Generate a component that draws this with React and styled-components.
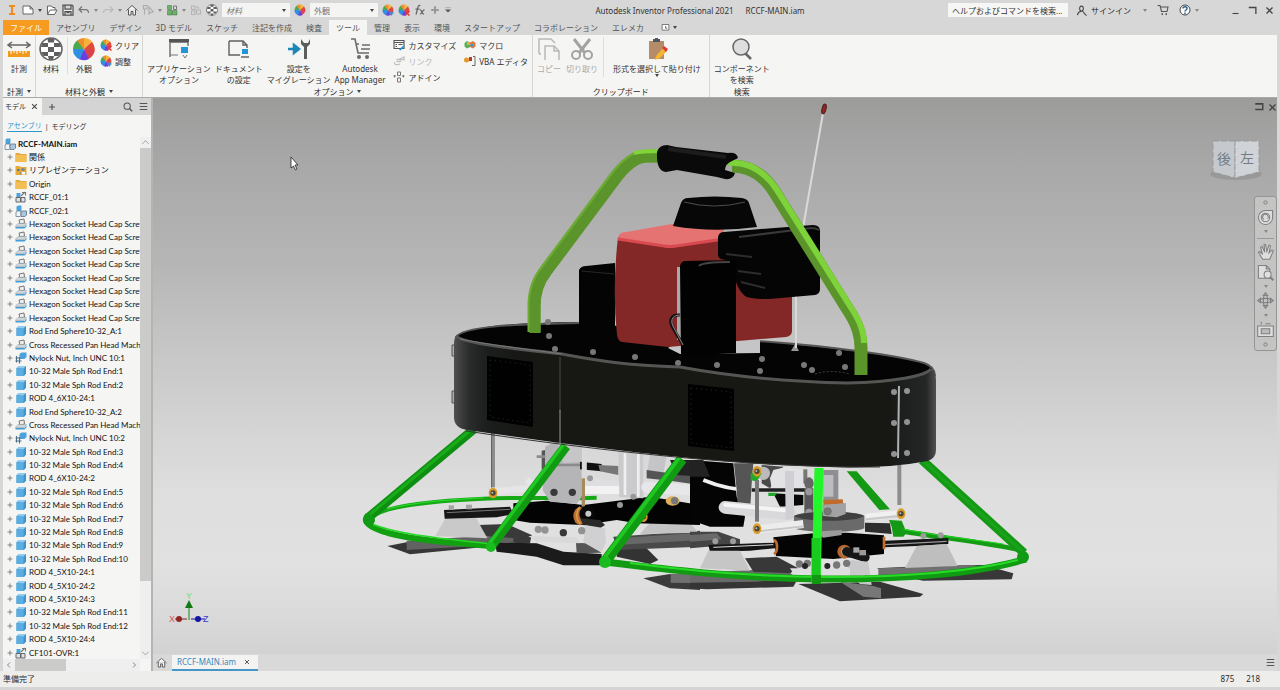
import React from "react";
import styled, { createGlobalStyle } from "styled-components";

const GlobalStyle = createGlobalStyle`
  * {
    box-sizing: border-box;
  }

  body {
    margin: 0;
    background: #d7d7d7;
    color: #2b2b2b;
    font-family: "Noto Sans", "Noto Sans CJK JP", sans-serif;
    font-size: 8px;
    line-height: 11px;
  }

  button, input, select {
    font: inherit;
    color: inherit;
    border: 0;
    padding: 0;
    margin: 0;
    background: none;
  }

  svg {
    display: block;
    flex: none;
  }

  ul {
    list-style: none;
    margin: 0;
    padding: 0;
  }
`;

const tabs = ["アセンブリ", "デザイン", "3D モデル", "スケッチ", "注記を作成", "検査", "ツール", "管理", "表示", "環境", "スタートアップ", "コラボレーション", "エレメカ"];

const treeRows = [
  ["folder", "関係"],
  ["views", "リプレゼンテーション"],
  ["folder", "Origin"],
  ["sub", "RCCF_01:1"],
  ["assembly", "RCCF_02:1"],
  ["screw", "Hexagon Socket Head Cap Screw"],
  ["screw", "Hexagon Socket Head Cap Screw"],
  ["screw", "Hexagon Socket Head Cap Screw"],
  ["screw", "Hexagon Socket Head Cap Screw"],
  ["screw", "Hexagon Socket Head Cap Screw"],
  ["screw", "Hexagon Socket Head Cap Screw"],
  ["screw", "Hexagon Socket Head Cap Screw"],
  ["screw", "Hexagon Socket Head Cap Screw"],
  ["part", "Rod End Sphere10-32_A:1"],
  ["screw", "Cross Recessed Pan Head Mach"],
  ["nut", "Nylock Nut, Inch UNC 10:1"],
  ["part", "10-32 Male Sph Rod End:1"],
  ["part", "10-32 Male Sph Rod End:2"],
  ["part", "ROD 4_6X10-24:1"],
  ["part", "Rod End Sphere10-32_A:2"],
  ["screw", "Cross Recessed Pan Head Mach"],
  ["nut", "Nylock Nut, Inch UNC 10:2"],
  ["part", "10-32 Male Sph Rod End:3"],
  ["part", "10-32 Male Sph Rod End:4"],
  ["part", "ROD 4_6X10-24:2"],
  ["part", "10-32 Male Sph Rod End:5"],
  ["part", "10-32 Male Sph Rod End:6"],
  ["part", "10-32 Male Sph Rod End:7"],
  ["part", "10-32 Male Sph Rod End:8"],
  ["part", "10-32 Male Sph Rod End:9"],
  ["part", "10-32 Male Sph Rod End:10"],
  ["part", "ROD 4_5X10-24:1"],
  ["part", "ROD 4_5X10-24:2"],
  ["part", "ROD 4_5X10-24:3"],
  ["part", "10-32 Male Sph Rod End:11"],
  ["part", "10-32 Male Sph Rod End:12"],
  ["part", "ROD 4_5X10-24:4"],
  ["sub", "CF101-OVR:1"],
];

/* ---------- icons ---------- */

const Ball = () => (
  <>
    <path d="M12 12 1 12A11 11 0 0 1 6 3z" fill="#4aa84e" />
    <path d="M12 12 5 3.500A11 11 0 0 1 13 1z" fill="#f08b2e" />
    <path d="M12 12 12 1A11 11 0 0 1 21 6z" fill="#f6b23c" />
    <path d="M12 12 20 5A11 11 0 0 1 22 16z" fill="#e0483e" />
    <path d="M12 12 22.500 14A11 11 0 0 1 16 22z" fill="#d8434c" />
    <path d="M12 12 17 22A11 11 0 0 1 7 22z" fill="#6a3fe0" />
    <path d="M12 12 8 22.400A11 11 0 0 1 1 12z" fill="#2f8fe0" />
  </>
);

const Checker = () => (
  <>
    <circle cx="12" cy="12" r="11" fill="#fff" stroke="#666" strokeWidth="1.500" />
    <path d="M8.500 1.500h7l-.5 4H9zM3 6h6v4H2zM15 6h6l1 4h-7zM9 10h6v5H9zM2 15h7v4H4.500zM15 15h7l-2.500 4H15zM9 19h6l-1 4h-4zM1 11h1v3H1z" fill="#5f5f5f" />
  </>
);

const paths = {
  logo: <path d="M6 2h12v4h-4v12h4v4H6v-4h4V6H6z" fill="#f08c1e" />,
  newFile: <path d="M2 4h14l6 6v10H2zM16 4v6h6" fill="#fff" stroke="#666" strokeWidth="2" />,
  open: <path d="M3 21V4h8l2 3h5v5M3 21l5-9h14l-5 9z" fill="#fff" stroke="#666" strokeWidth="2" />,
  save: <path d="M2 2h18l2 2v18H2zM6 3v7h12V3M6 22v-7h12v7M9 17h6" fill="#eee" stroke="#505050" strokeWidth="2.500" />,
  undo: <path d="M8 5 2 11l6 6M3 11h12c4 0 6 3 6 7" fill="none" stroke="#777" strokeWidth="2.500" />,
  redo: <path d="M16 5l6 6-6 6M21 11H9c-4 0-6 3-6 7" fill="none" stroke="#bcbcbc" strokeWidth="2.500" />,
  home: <path d="M1 13 12 3l11 10M5 11v11h5v-7h4v7h5V11" fill="#f6f6f6" stroke="#555" strokeWidth="2" />,
  select: <path d="M3 3h7v7H3zM5 10v11M14 6v14l4-4h5z" fill="none" stroke="#aaa" strokeWidth="2.200" />,
  parts: (
    <>
      <path d="M3 3h8v8H3zM3 13h9v9H3zM13 13h9v9h-9z" fill="#65b565" stroke="#4c6b4c" />
      <path d="M15 4h6v7h-6z" fill="none" stroke="#777" strokeWidth="2" />
    </>
  ),
  update: <path d="M3 4h7v7H3zM3 14h7v7H3zM13 12h8v8h-8zM13 5l5 4" fill="none" stroke="#b4b4b4" strokeWidth="2.200" />,
  checker: <Checker />,
  ball: <Ball />,
  ballAdd: (
    <>
      <Ball />
      <path d="M14 18h9M19 14v9" stroke="#2f8fe0" strokeWidth="3" />
    </>
  ),
  ballClear: (
    <>
      <Ball />
      <path d="m14 14 9 9m0-9-9 9" stroke="#e0383e" strokeWidth="3" />
    </>
  ),
  fx: <path d="M13 3c-4-1-5 2-6 7L4 21M3 10h8M12 12c4-1 3 9 8 8M21 11c-4 0-5 9-9 9" fill="none" stroke="#666" strokeWidth="2.500" />,
  plus: <path d="M12 3v18M3 12h18" stroke="#999" strokeWidth="5" />,
  caretBar: <path d="M4 5h16M4 11h16l-8 8z" fill="#555" stroke="#555" />,
  measure: (
    <>
      <path d="M1 8h22M5 5 1 8l4 3M19 5l4 3-4 3" fill="none" stroke="#666" strokeWidth="1.500" />
      <path d="M1 14h22v6H1z" fill="#f39a1e" />
      <path d="M4 14v3M7 14v2M10 14v3M13 14v2M16 14v3M19 14v2" stroke="#fff" />
    </>
  ),
  appOptions: (
    <>
      <path d="M3 20V4h18v5M3 5h18" fill="none" stroke="#606060" strokeWidth="1.300" />
      <path d="M2 2h20v3H2z" fill="#555" />
      <path d="M14 10h7v6h-7z" fill="#2196d8" />
      <path d="M3 18h8M16 18l2 3 2-3" fill="none" stroke="#777" />
    </>
  ),
  docOptions: (
    <>
      <path d="M2 4h14l4 4v3M2 4v14h11M16 4v4h4" fill="none" stroke="#606060" strokeWidth="1.400" />
      <path d="M15 12h6v5h-6z" fill="#2196d8" />
      <path d="M14 20h8" stroke="#666" strokeWidth="1.500" />
    </>
  ),
  migrate: (
    <>
      <path d="M1 12h7M7 8l5 4-5 4z" stroke="#1e86b8" strokeWidth="2.500" fill="#1e86b8" />
      <path d="M14 2v5l3 3v12h3V10l3-3V2l-2 4h-4z" fill="#5d5d5d" />
    </>
  ),
  cart: (
    <>
      <path d="M3 2h4l3 14h11M8 7h3M14 8h8M13 12h9" fill="none" stroke="#6b6b6b" strokeWidth="1.600" />
      <circle cx="11" cy="20" r="2" fill="#6b6b6b" />
      <circle cx="19" cy="20" r="2" fill="#6b6b6b" />
    </>
  ),
  customize: (
    <>
      <path d="M2 3h20v16H2zM2 7h20M5 11h3M11 11h8M5 15h3" fill="none" stroke="#555" strokeWidth="2.200" />
      <path d="m12 21 9-8 2 2-8 8z" fill="#2196d8" />
    </>
  ),
  link: <path d="M3 14c-2 6 8 7 11 3M7 11c2-4 8-3 8 2H7M14 8l8-4v6z" fill="none" stroke="#c0c0c0" strokeWidth="2.500" />,
  addin: <path d="M9 2h6v7H9zM9 14h6v8H9zM1 10h5M18 10h5M3 8v5M21 8v5" fill="none" stroke="#777" strokeWidth="2" />,
  macro: (
    <>
      <path d="M1 8 6 4l6 3v9l-6 3-5-4z" fill="#58b058" />
      <path d="m6 5 6 3v4H6z" fill="#e6b03c" />
      <path d="m12 7 6-3 5 4v7l-5 4-6-3z" fill="#e07a38" />
      <path d="M13 10h5v5h-5z" fill="#3997d8" />
    </>
  ),
  vba: (
    <>
      <circle cx="5" cy="10" r="5" fill="#e09a28" />
      <path d="M10 4h6v8h-6z" fill="#b8382e" />
      <path d="M18 3h4v18h-6" fill="none" stroke="#666" strokeWidth="2" />
    </>
  ),
  copy: <path d="M2 17V2h12l4 4M2 17h2M8 23V9h9l5 5v9M17 9v5h5" fill="none" stroke="#b9b9b9" strokeWidth="1.500" />,
  cut: (
    <>
      <path d="M4 2 15 16M20 2 9 16" stroke="#a3a3a3" strokeWidth="3" />
      <circle cx="6" cy="18" r="4" fill="none" stroke="#a3a3a3" strokeWidth="2" />
      <circle cx="18" cy="18" r="4" fill="none" stroke="#a3a3a3" strokeWidth="2" />
    </>
  ),
  paste: (
    <>
      <path d="M4 4h15v18H4z" fill="#b58c68" />
      <path d="M8 5V2h2V1h3v1h2v3z" fill="#4d5862" />
      <path d="m11 19 7-8 4 3-7 7-5 2z" fill="#f2b632" />
      <path d="m17 11 2-2 4 3-2 3z" fill="#dd3b3b" />
    </>
  ),
  find: (
    <>
      <path d="m15 16 6 6" stroke="#666" strokeWidth="2.500" />
      <circle cx="11" cy="10" r="8" fill="#dedede" stroke="#666" strokeWidth="1.500" />
    </>
  ),
  search: (
    <>
      <path d="m15 15 7 7" stroke="#555" strokeWidth="3.500" />
      <circle cx="10" cy="10" r="7.500" fill="none" stroke="#555" strokeWidth="2.500" />
    </>
  ),
  menu: <path d="M2 4h20M2 12h20M2 20h20" stroke="#555" strokeWidth="3" />,
  cross: <path d="m4 4 16 16M20 4 4 20" stroke="#444" strokeWidth="3.500" />,
  add: <path d="M12 3v18M3 12h18" stroke="#555" strokeWidth="3.500" />,
  expand: <path d="M12 2v20M2 12h20" stroke="#777" strokeWidth="3.500" />,
  user: <path d="M12 13c-5 0-6-10 0-11 6 1 5 11 0 11zm0 0c-5 1-8 4-9 9M12 13c4 1 6 3 8 8m-3-4 6 6" fill="none" stroke="#444" strokeWidth="2.200" />,
  trolley: (
    <>
      <path d="M1 3h5l3 12h11l2-9H7" fill="none" stroke="#555" strokeWidth="2.200" />
      <path d="M9 20h3M17 20h3" stroke="#555" strokeWidth="3.500" />
    </>
  ),
  help: (
    <>
      <circle cx="12" cy="12" r="10" fill="#fff" stroke="#444" strokeWidth="2" />
      <path d="M8 9c0-5 8-5 8 0 0 3-4 3-4 6M12 17v3" fill="none" stroke="#27658f" strokeWidth="3" />
    </>
  ),
  minimize: <path d="M4 20h16" stroke="#444" strokeWidth="3" />,
  restore: <path d="M2 4h19v17" fill="none" stroke="#444" strokeWidth="3.500" />,
  frame: <path d="M3 4h18v14H3M3 5h18" fill="none" stroke="#444" strokeWidth="3.500" />,
  play: <path d="M3 4h18v15H3zM12 8v6h5" fill="#fff" stroke="#555" strokeWidth="2" />,
  up: <path d="m5 15 7-7 7 7" fill="none" stroke="#999" strokeWidth="2" />,
  down: <path d="m5 8 7 7 7-7" fill="none" stroke="#999" strokeWidth="2" />,
  left: <path d="m14 7-5 5 5 5" fill="none" stroke="#888" strokeWidth="2" />,
  right: <path d="m10 7 5 5-5 5" fill="none" stroke="#888" strokeWidth="2" />,
  folder: (
    <>
      <path d="M1 4h8l2 2h12v16H1z" fill="#e6a93a" />
      <path d="M1 8h22v14H1z" fill="#f3bf55" />
    </>
  ),
  views: (
    <>
      <path d="M1 4h8l2 2h12v16H1z" fill="#e6a93a" />
      <path d="M4 10h5v4H4zM13 9h6v4h-6zM11 16h5v5h-5z" fill="#4b7fae" />
      <path d="M13 16h7v5h-7z" fill="#fff" />
    </>
  ),
  assembly: (
    <>
      <path d="m3 3 3-2h7v10l-3 2H3z" fill="#4ba3dd" />
      <path d="m2 14 3-2h7v9l-2 2H2z" fill="#f2f4f5" stroke="#66788a" strokeWidth="1.500" />
      <path d="m12 14 3-2h8v8l-3 3h-8z" fill="#a9c7de" stroke="#56697b" strokeWidth="1.500" />
    </>
  ),
  sub: (
    <>
      <path d="M3 4h8v8H3z" fill="#4ba3dd" />
      <path d="M2 13h9v9H2zM12 13h8v9h-8z" fill="#dce3e8" stroke="#666" strokeWidth="2" />
      <path d="m12 10 8-8M14 3h7v6" fill="none" stroke="#777" strokeWidth="2.200" />
    </>
  ),
  screw: (
    <>
      <path d="m8 4 10-2 1 8-9 2z" fill="#eee" stroke="#777" strokeWidth="2" />
      <path d="m1 16 5-5h17l-5 6H1z" fill="#cfd6da" stroke="#8b979f" />
      <path d="M1 18h18l4-5v4l-4 4H1z" fill="#439dd6" />
    </>
  ),
  nut: (
    <>
      <path d="m9 4 4-3h10v9l-4 4H9z" fill="#4ba3dd" />
      <path d="M3 8v13M9 10v13M1 12h10M1 18h12" stroke="#4f6f88" strokeWidth="2.200" />
    </>
  ),
  part: (
    <>
      <path d="m3 6 5-4h14v15l-4 5H3z" fill="#3f93cf" />
      <path d="M3 7h14v15H3z" fill="#5aaee2" />
      <path d="m3 6 5-4h14l-5 5z" fill="#92cdf0" />
    </>
  ),
};

function Icon({ name, size = 12 }) {
  return (
    <svg width={size} height={size} viewBox="0 0 24 24" aria-hidden="true">
      {paths[name]}
    </svg>
  );
}

const Caret = styled.span`
  flex: none;
  border: 2px solid transparent;
  border-top: 3px solid ${(props) => (props.$soft ? "#888" : "#444")};
  border-bottom: 0;
  margin-left: ${(props) => (props.$spaced ? "4px" : "0")};
`;

/* ---------- page parts ---------- */

const Page = styled.div`
  display: flex;
  flex-direction: column;
  min-height: 100vh;
`;

const TitleBar = styled.header`
  display: flex;
  align-items: center;
  height: 20px;
  padding: 0 6px;
`;

const QuickAccess = styled.div`
  display: flex;
  align-items: center;
  gap: 4px;

  button {
    display: flex;
    align-items: center;
    gap: 4px;
  }
`;

const SelectBox = styled.label`
  display: flex;
  align-items: center;
  width: 68px;
  height: 14px;
  padding: 0 4px;
  background: #f4f4f3;
  color: #777;

  select {
    flex: 1;
    appearance: none;
    outline: 0;
    font-style: ${(props) => (props.$italic ? "italic" : "normal")};
  }
`;

const WindowTitle = styled.div`
  flex: 1;
  display: flex;
  justify-content: center;
  gap: 12px;
  white-space: nowrap;
  color: #333;
`;

const TitleRight = styled.div`
  display: flex;
  align-items: center;
  gap: 8px;

  button {
    display: flex;
    align-items: center;
    gap: 4px;
  }
`;

const AccountTools = styled.div`
  display: flex;
  align-items: center;
  gap: 10px;
  margin-left: 4px;
`;

const SearchBox = styled.input`
  width: 120px;
  height: 14px;
  padding: 0 4px;
  background: #f6f6f5;

  &::placeholder {
    color: #333;
    opacity: 1;
  }
`;

const WindowButtons = styled.div`
  display: flex;
  gap: 8px;
  margin-left: 24px;
`;

const TabBar = styled.nav`
  display: flex;
  align-items: stretch;
  height: 15px;
  padding: 0 3px;
`;

const Tab = styled.button`
  padding: 0 7px;
  color: ${(props) => (props.$file ? "#fff" : "#555")};
  background: ${(props) => (props.$file ? "#f79a20" : props.$active ? "#f5f5f3" : "none")};
  min-width: ${(props) => (props.$file ? "44px" : "0")};
  white-space: nowrap;
`;

const TabExtra = styled.button`
  display: flex;
  align-items: center;
  gap: 3px;
  margin-left: 10px;
`;

const Ribbon = styled.section`
  display: flex;
  margin: 0 3px;
  height: 63px;
  background: #f5f5f3;
  border-bottom: 1px solid #a8a8a6;
`;

const Group = styled.div`
  display: flex;
  flex-direction: column;
  justify-content: space-between;
  border-right: 1px solid ${(props) => (props.$plain ? "transparent" : "#d6d6d4")};
  padding: 2px ${(props) => props.$pad || 4}px 0;
`;

const Tools = styled.div`
  display: flex;
  justify-content: center;
  gap: ${(props) => props.$gap || 4}px;
`;

const GroupLabel = styled.div`
  display: flex;
  align-items: center;
  justify-content: center;
  white-space: nowrap;
`;

const BigButton = styled.button`
  display: flex;
  flex-direction: column;
  align-items: center;
  white-space: nowrap;
  padding: 0 ${(props) => (props.$wide ? "4px" : "0")};
  color: ${(props) => (props.$off ? "#aaa" : "#333")};

  svg {
    margin-bottom: 2px;
  }
`;

const SmallTools = styled.div`
  display: flex;
  flex-direction: column;
  gap: 4px;
  padding-top: 2px;
  margin-left: ${(props) => (props.$apart ? "4px" : "0")};
`;

const SmallButton = styled.button`
  display: flex;
  align-items: center;
  gap: 3px;
  height: 12px;
  white-space: nowrap;
  color: ${(props) => (props.$off ? "#b5b5b5" : "#333")};
`;

const Divider = styled.span`
  width: 1px;
  align-self: stretch;
  background: #dededc;
`;

const Workspace = styled.main`
  flex: 1;
  display: flex;
  min-height: 0;
  padding: 0 3px;
`;

const Browser = styled.aside`
  display: flex;
  flex-direction: column;
  width: 150px;
  flex: none;
  background: #f5f5f4;
  border-right: 2px solid #b4b4b4;
`;

const BrowserTabs = styled.div`
  display: flex;
  align-items: center;
  gap: 6px;
  height: 17px;
  padding-right: 3px;
  background: #d4d4d4;
`;

const BrowserTab = styled.div`
  display: flex;
  align-items: center;
  gap: 5px;
  height: 17px;
  padding: 0 4px 0 2px;
  background: #f5f5f4;
  font-size: 7px;
`;

const Spacer = styled.span`
  flex: 1;
`;

const ViewTabs = styled.div`
  display: flex;
  align-items: center;
  gap: 3px;
  height: 22px;
  padding: 0 4px;
  font-size: 7px;

  a {
    color: #333;
    text-decoration: none;
  }

  a:first-child {
    color: #3198cc;
    border-bottom: 1px solid #3198cc;
  }
`;

const TreeArea = styled.div`
  flex: 1;
  display: flex;
  min-height: 0;
`;

const TreeList = styled.ul`
  flex: 1;
  display: flex;
  flex-direction: column;
  min-width: 0;
  overflow: hidden;
  font-family: Lato, "Noto Sans CJK JP", sans-serif;
`;

const TreeRow = styled.li`
  flex: 1 0 13px;
  display: flex;
  align-items: center;
  gap: 2px;
  padding-left: ${(props) => (props.$root ? "1px" : "4px")};
  font-weight: ${(props) => (props.$root ? "bold" : "normal")};
  color: #111;
  white-space: nowrap;
  line-height: 12px;
`;

const ScrollTrack = styled.div`
  display: flex;
  flex-direction: ${(props) => (props.$vertical ? "column" : "row")};
  align-items: center;
  flex: none;
  width: ${(props) => (props.$vertical ? "11px" : "137px")};
  height: ${(props) => (props.$vertical ? "auto" : "12px")};
  background: #efeff0;
`;

const Thumb = styled.div`
  background: #cbcbca;
  width: ${(props) => (props.$vertical ? "11px" : "51px")};
  height: ${(props) => (props.$vertical ? "83%" : "12px")};
`;

const Canvas = styled.section`
  flex: 1;
  display: flex;
  flex-direction: column;
  min-width: 0;
`;

const Viewport = styled.div`
  position: relative;
  flex: 1;
  min-height: 300px;
  background: linear-gradient(#9c9c9a 0%, #a8a8a9 12%, #b6b6b7 30%, #c3c3c3 42%, #d3d3d4 58%, #dfdfe0 72%, #e1e1e1 84%, #dadada 93%, #d2d2d3 100%);
`;

const Scene = styled.svg`
  position: absolute;
  inset: 0;
  width: 100%;
  height: 100%;
`;

const ViewportButtons = styled.div`
  position: absolute;
  top: 4px;
  right: 0;
  display: flex;
  gap: 4px;
`;

const NavBar = styled.div`
  position: absolute;
  top: 98px;
  right: 0;
  display: flex;
  flex-direction: column;
  align-items: center;
  justify-content: space-between;
  width: 23px;
  height: 155px;
  padding: 3px 0;
  background: #c4c4c3;
  border: 1px solid #949494;
  border-radius: 3px;

  hr {
    width: 17px;
    margin: 0;
    border: 0;
    border-top: 1px solid #999;
  }
`;

const DocTabs = styled.div`
  display: flex;
  align-items: center;
  gap: 5px;
  height: 17px;
  padding: 0 2px 0 3px;
  background: #d9d9d9;
`;

const DocTab = styled.button`
  display: flex;
  align-items: center;
  gap: 8px;
  height: 16px;
  padding: 0 8px 0 5px;
  background: #f3f3f2;
  border-bottom: 2px solid #4696c8;
  color: #3688bb;
`;

const StatusBar = styled.footer`
  display: flex;
  align-items: center;
  justify-content: space-between;
  height: 19px;
  padding: 0 20px 2px 3px;
  background: #ededeb;
  border-bottom: 3px solid #d5d5d5;
`;

const Coords = styled.div`
  display: flex;
  gap: 12px;
`;

/* ---------- 3D scene ---------- */

function Poly({ p, f, s }) {
  return <polygon points={p} fill={f} stroke={s} />;
}

function Bolts({ at, r = 4, fill = "#8c8c8c" }) {
  return at.map(([x, y]) => <circle key={x + "-" + y} cx={x} cy={y} r={r} fill={fill} />);
}

function Tube({ d, w, dark, light, shift = -1 }) {
  return (
    <g fill="none" strokeLinejoin="round">
      <path d={d} stroke={dark} strokeWidth={w} />
      <path d={d} stroke={light} strokeWidth={w / 3} transform={`translate(${shift} ${shift})`} />
    </g>
  );
}

function RodEnd({ x, y }) {
  return (
    <>
      <ellipse cx={x} cy={y} rx="13" ry="16" fill="#d89b28" />
      <circle cx={x} cy={y} r="8" fill="#4b4437" />
      <circle cx={x - 2} cy={y - 1} r="3" fill="#bbb" />
    </>
  );
}

// Left skids, rotor head and linkages, drawn at 3x
function LeftUndercarriage() {
  return (
    <g transform="translate(350 410) scale(.33333)">
      <Poly p="112,408 170,397 410,398 410,410 180,433" f="#363636" />
      <Poly p="385,345 470,342 545,375 540,400 470,398 400,375" f="#3a3a3a" />
      <Poly p="170,392 400,378 490,384 490,402 170,420" f="#626262" />
      <Poly p="290,318 375,318 412,385 256,378" f="#c9c9ca" />
      <Poly p="282,300 480,290 490,312 440,322 284,326" f="#161616" />
      <path d="M290 308 480 298" stroke="#777" strokeWidth="3" />
      <Poly p="296,286 312,286 312,300 296,300" f="#a5a5a5" />
      <Poly p="348,284 366,284 366,298 348,298" f="#a5a5a5" />
      <Poly p="435,398 560,400 640,425 755,432 755,466 640,466 560,440 440,425" f="#1b1b1b" />
      <path d="M80 312C130 285 260 272 400 266S600 268 740 263" fill="none" stroke="#16a916" strokeWidth="12" />
      <path d="M110 297C200 275 300 270 400 263" fill="none" stroke="#2bdd2b" strokeWidth="3" />
      <Poly p="800,395 870,395 925,450 900,462 800,440" f="#333" />
      <Poly p="790,380 1050,362 1050,410 800,420" f="#494949" />
      <Poly p="800,385 1050,368 1050,390 800,405" f="#686868" />
      <Poly p="905,332 1010,328 1045,368 870,372" f="#c4c4c5" />
      <Poly p="490,280 590,272 700,285 900,260 1050,285 1050,345 860,340 800,330 700,345 540,338 490,330" f="#030303" />
      <path d="M430 245 535 235M530 210 570 235" stroke="#e6e6e6" strokeWidth="20" />
      <Poly p="585,110 620,92 680,105 695,150 695,260 680,282 600,275 578,240 585,180" f="#b5b5b8" />
      <Poly p="575,122 585,120 585,178 575,178" f="#555" />
      <path d="M560 140h26M600 165h90" stroke="#8b8b8b" strokeWidth="8" />
      <Poly p="620,95 700,108 700,150 690,155 640,160" f="#c6c6c8" />
      <Poly p="690,155 755,162 755,184 690,178" f="#111" />
      <Poly p="745,165 805,168 805,195 750,184" f="#777" />
      <Poly p="705,195 820,220 820,268 705,235" f="#dedee0" />
      <path d="M700 240h115" stroke="#f2f2f2" strokeWidth="24" />
      <Poly p="805,120 880,128 880,265 808,262" f="#cbcbce" />
      <path d="M825 130v125M865 130v130" stroke="#efefef" strokeWidth="8" />
      <Poly p="900,135 950,138 940,190 890,190" f="#c5c5c8" />
      <Poly p="890,180 960,190 1050,200 1050,225 960,212 890,205" f="#555" />
      <path d="M890 232 1015 240" stroke="#e7e7e9" strokeWidth="32" strokeLinecap="round" />
      <Poly p="960,150 1050,150 1050,200 980,195" f="#242424" />
      <path d="M429 65V232" stroke="#8f8f8f" strokeWidth="12" />
      <path d="M425 65V232" stroke="#5f5f5f" strokeWidth="3" />
      <path d="M703 112V205" stroke="#dadada" strokeWidth="15" />
      <path d="M700 205V290" stroke="#a48c5c" strokeWidth="10" />
      <RodEnd x={429} y={249} />
      <RodEnd x={880} y={320} />
      <ellipse cx="690" cy="318" rx="20" ry="27" fill="#b9703a" />
      <circle cx="712" cy="312" r="24" fill="#080808" />
      <path d="M690 290c-14 15-13 40 2 52" fill="none" stroke="#e0a23c" strokeWidth="4" />
      <Poly p="690,325 750,330 765,345 750,355 700,345" f="#292929" />
      <Poly p="705,345 765,355 768,398 755,425 740,420 700,400" f="#d0d0d2" />
      <Poly p="678,398 705,400 755,428 680,430" f="#555" />
      <Poly p="535,378 680,382 690,400 560,395" f="#d9d9da" />
      <Bolts at={[[565, 358], [585, 360], [695, 362]]} r={11} fill="#929292" />
      <Bolts at={[[640, 368], [612, 247], [667, 247]]} r={11} fill="#393939" />
      <Bolts at={[[715, 311]]} r={9} fill="#c8c8c8" />
      <ellipse cx="968" cy="273" rx="21" ry="14" fill="#ddb15c" />
      <circle cx="974" cy="272" r="11" fill="#777" />
      <Bolts at={[[720, 205], [810, 285], [850, 260]]} r={9} fill="#999" />
      <Poly p="880,505 960,492 1050,510 1050,540 960,535" f="#3b3b3b" />
      <Poly p="962,492 1050,492 1050,520 962,518" f="#707070" />
    </g>
  );
}

// Right skids and main rotor head, drawn at 3x
function RightUndercarriage() {
  return (
    <g transform="translate(690 410) scale(.33333)">
      <Poly p="0,365 85,365 150,388 150,402 0,415" f="#444" />
      <Poly p="0,375 80,370 95,388 0,395" f="#6a6a6a" />
      <Poly p="0,512 320,512 310,530 50,538 0,535" f="#353535" />
      <Poly p="0,490 180,480 300,488 320,505 200,515 0,518" f="#696969" />
      <Poly p="165,445 260,440 325,475 300,490 190,485" f="#383838" />
      <Poly p="560,475 700,468 880,465 970,490 965,508 700,512 640,500" f="#383838" />
      <Poly p="565,475 850,466 900,475 700,505 565,495" f="#717171" />
      <Poly p="325,522 570,515 700,552 690,560 450,574" f="#343434" />
      <Poly p="450,515 550,528 573,535 573,565 520,560" f="#777" />
      <Poly p="0,150 130,160 140,260 165,320 160,350 60,350 0,330" f="#040404" />
      <Poly p="0,150 40,150 60,200 0,200" f="#222" />
      <path d="M40 210C100 235 170 245 230 237" fill="none" stroke="#efefef" strokeWidth="12" />
      <Poly p="132,160 190,160 185,220 180,310 145,308 140,240" f="#555" />
      <Poly p="215,165 280,170 240,235 215,220" f="#4a4a4a" />
      <Poly p="240,205 250,180 290,170 345,180 340,240 245,235" f="#e2e2e4" />
      <Poly p="250,250 340,255 340,285 270,290" f="#090909" />
      <path d="M185 240 345 240" stroke="#202020" strokeWidth="10" />
      <path d="M105 292 300 312" stroke="#d9d9dc" strokeWidth="38" strokeLinecap="round" />
      <path d="M105 284 300 302" stroke="#f4f4f4" strokeWidth="12" strokeLinecap="round" />
      <Poly p="285,182 312,184 312,325 287,330" f="#cfcfd4" />
      <circle cx="220" cy="190" r="20" fill="#bbb" />
      <Poly p="182,190 215,190 200,215 182,210" f="#22a92a" />
      <Poly p="235,248 262,248 255,258 235,258" f="#22a92a" />
      <Poly p="400,180 445,180 445,275 400,275" f="#8f8f91" />
      <Poly p="400,195 430,195 430,260 400,260" f="#bdbdc1" />
      <Poly p="340,178 352,178 352,220 340,220" f="#777" />
      <ellipse cx="357" cy="220" rx="14" ry="18" fill="#666" />
      <Poly p="343,235 370,235 370,320 343,315" f="#575757" />
      <Bolts at={[[357, 245], [357, 307]]} r={11} fill="#999" />
      <Poly p="400,270 458,268 460,282 430,290 400,285" f="#c06a2b" />
      <Poly p="398,285 467,280 467,315 440,330 398,325" f="#a2a2a4" />
      <circle cx="413" cy="304" r="12" fill="#777" stroke="#444" />
      <path d="M312 318C340 300 500 300 523 318V355C490 370 350 370 312 355z" fill="#6a6a6a" />
      <path d="M312 318C340 302 500 302 523 318 500 337 340 337 312 318z" fill="#404040" />
      <Poly p="398,285 467,280 467,312 440,322 398,318" f="#a2a2a4" />
      <circle cx="413" cy="304" r="11" fill="#777" stroke="#444" />
      <path d="M527 322 630 312" stroke="#f0f0f0" strokeWidth="22" />
      <path d="M527 328 630 318" stroke="#c9c9cb" strokeWidth="7" />
      <Poly p="525,338 600,340 605,372 525,365" f="#2d2d2d" />
      <path d="M205 358 340 342" stroke="#ececec" strokeWidth="24" />
      <path d="M205 364 340 349" stroke="#c5c5c7" strokeWidth="5" />
      <path d="M201 210V335" stroke="#777" strokeWidth="12" />
      <path d="M628 165V285" stroke="#8e8e8e" strokeWidth="12" />
      <RodEnd x={201} y={184} />
      <RodEnd x={201} y={356} />
      <RodEnd x={633} y={311} />
      <Poly p="470,184 500,184 600,298 568,300" f="#149914" />
      <Poly p="597,330 635,332 650,368 640,380 610,380 605,350" f="#149914" />
      <path d="M630 362C760 385 880 395 990 420" fill="none" stroke="#149c14" strokeWidth="15" />
      <path d="M640 358C760 380 860 390 940 402" fill="none" stroke="#25d625" strokeWidth="3" />
      <Poly p="55,405 255,398 255,415 180,422 60,425" f="#151515" />
      <path d="M70 412 250 404" stroke="#ddd" strokeWidth="3" />
      <Poly p="585,392 775,384 775,402 680,408 585,412" f="#151515" />
      <path d="M585 404 770 394" stroke="#999" strokeWidth="4" />
      <Poly p="55,422 150,422 180,482 30,475" f="#c6c6c7" />
      <Poly p="680,408 770,402 803,468 645,474" f="#bebebf" />
      <path d="M250 382 370 370 470 368 582 376V432L430 447 258 438z" fill="#040404" />
      <path d="M252 390c12 5 12 35 0 42M582 380v38" fill="none" stroke="#c46c2b" strokeWidth="8" />
      <Poly p="370,365 455,360 455,375 400,383" f="#9b9b9b" />
      <circle cx="463" cy="425" r="21" fill="#b8642c" />
      <circle cx="468" cy="425" r="14" fill="#bbb" />
      <path d="M470 425 525 442" stroke="#171717" strokeWidth="28" strokeLinecap="round" />
      <Poly p="490,412 508,412 508,428 490,428" f="#a7a7a7" />
      <Poly p="508,420 528,420 528,436 508,436" f="#999" />
      <Poly p="482,450 535,455 545,525 510,522 470,485" f="#c9c9cb" />
      <Poly p="300,475 480,475 480,492 310,490" f="#dedee0" />
      <Bolts at={[[328, 462], [352, 460], [382, 462], [440, 465], [470, 460]]} r={11} fill="#777" />
      <Bolts at={[[412, 468], [345, 468]]} r={9} fill="#262626" />
      <Bolts at={[[76, 394], [129, 394], [700, 378], [752, 376]]} r={9} fill="#9c9c9c" />
    </g>
  );
}

function Skirt() {
  return (
    <g>
      <Tube d="M474 429 369 517" w={9} dark="#0f8f12" light="#19ac19" />
      <Tube d="M922 460 1024 553" w={9} dark="#149914" light="#1aa31a" />
      <path d="M368 515c-6 6 0 12 20 18 30 8 70 10 104 13" fill="none" stroke="#10a010" strokeWidth="6" />
      <path d="M372 524c30 12 80 15 118 20" fill="none" stroke="#28da28" strokeWidth="1.500" />
      <Tube d="M566 446 491 546" w={10} dark="#109b12" light="#1fc822" shift={-2} />
      <Tube d="M682 459 604 563" w={11} dark="#109b12" light="#1fc822" shift={-2} />
      <path d="M605 562C670 570 740 578 820 579S980 573 1026 559" fill="none" stroke="#109b12" strokeWidth="7" />
      <path d="M630 563C690 571 760 577 830 577S970 572 1018 560" fill="none" stroke="#28dc28" strokeWidth="2" />
      <path d="M819 468 816 583" stroke="#22f52a" strokeWidth="9" />
      <path d="M816 538v45" stroke="#19c91d" strokeWidth="9" />
      <path d="M812 575h9v9h-9z" fill="#119812" />
      <circle cx="369" cy="520" r="6" fill="#119a13" />
      <circle cx="1023" cy="557" r="6" fill="#119a13" />
      <circle cx="491" cy="547" r="5" fill="#1abc1d" />
      <circle cx="605" cy="562" r="6" fill="#1abc1d" />
    </g>
  );
}

function Engine() {
  return (
    <g>
      <path d="m823 113-20 115M796 296v52" stroke="#d9d9d9" strokeWidth="2" fill="none" />
      <ellipse cx="824" cy="109" rx="2" ry="5" fill="#922626" stroke="#4d1c1c" transform="rotate(14 824 109)" />
      <path d="M579 270q2-4 7-4l29-3v77l-33-4q-3 0-3-4z" fill="#040404" />
      <path d="M582 271 614 274" stroke="#272727" />
      <path d="M668 348l12 6 80-1v-17l-80 3z" fill="#c5c5c7" />
      <path d="M618 237 670 246 736 236 792 290V331q0 5-6 6L668 347 622 342q-4-1-5-7-5-45 1-98z" fill="#842727" />
      <path d="M619 235q2-3 7-3l46-8 52 5v9l-50 7q-4 1-8 0l-48-6z" fill="#e57372" />
      <path d="M618 239 664 246q6 1 12 0l48-7" fill="none" stroke="#d84950" strokeWidth="3" />
      <path d="m673 226 8-23q2-5 7-5 27-3 54 0 6 1 7 5l8 24q-43 6-84-1z" fill="#070707" />
      <path d="m684 202q30 8 61 0" fill="none" stroke="#4d4d4d" />
      <path d="M677 267h4v73h-4z" fill="#a9a9a9" />
      <path d="M718 237q1-5 6-5l89-7q7 0 7 6v58q0 5-5 6l-46 4q-20 0-24-3-6-5-9-14l-2-20-13-3q-3-1-3-5z" fill="#050505" />
      <path d="m739 237 72-9q5 0 8 2" fill="none" stroke="#393939" strokeWidth="2" />
      <path d="m726 254 26 3M738 271l23 3M741 282l24 6" stroke="#2d2d2d" strokeWidth="2" />
      <path d="M680 266q1-5 6-5l50-1v93l-55 3z" fill="#020202" />
      <path d="m699 266q3-4 31-4" fill="none" stroke="#444" strokeWidth="2" />
      <path d="M680 315c-10-1-11 7-7 13l10 17" fill="none" stroke="#101010" strokeWidth="3" />
      <path d="M680 315c-9 0-10 7-6 13l9 17" fill="none" stroke="#bbb" strokeWidth=".7" />
    </g>
  );
}

function Handle() {
  const left = "M534 332V305Q534 285 546 270L614 179Q630 157 645 156H662";
  const right = "M732 166Q758 166 774 191L852 316Q861 331 861 348V375";
  return (
    <g>
      <path d={left} fill="none" stroke="#6cab34" strokeWidth="13" />
      <path d={left} fill="none" stroke="#5b942a" strokeWidth="11" transform="translate(1 1)" />
      <path d="M634 153q8-2 26-2" fill="none" stroke="#80d43a" strokeWidth="4" />
      <path d={right} fill="none" stroke="#5b942a" strokeWidth="13" />
      <path d="M728 163Q758 161 777 190L855 314Q864 329 864 343" fill="none" stroke="#7ed33b" strokeWidth="6" />
      <path d="M657 152q2-7 10-7l9 2 52 6q9-1 10 5l-6 3q-7 3-7 9l10 3q-2 7-10 6l-8-2-40-7-11 2q-10-1-9-20z" fill="#0a0a0a" />
      <path d="m668 149 58 8" stroke="#1d1d1d" strokeWidth="4" />
    </g>
  );
}

const frontRim = "M456 336C462 342 490 346 562 354 585 358 615 365 680 367 740 378 800 382 847 383 895 382 925 376 931 369";

function Shell() {
  return (
    <g>
      <path d="M455 340C458 326 510 323 580 322L760 341C830 347 900 356 924 363 932 366 934 369 931 371 920 384 820 386 760 380L560 358z" fill="#040404" />
      <path d="M456 337C462 327 510 324 580 323M758 341C830 346 900 356 924 363 930 365 935 368 935 376" fill="none" stroke="#555" strokeWidth="2" />
      <Bolts at={[[549, 336], [555, 349], [593, 352], [548, 322], [635, 357], [717, 365], [762, 359], [760, 371], [804, 365], [812, 370], [845, 367], [839, 353], [678, 363]]} r={3} fill="#777" />
      <path d="M815 374q15-5 35 0" stroke="#444" strokeDasharray="2 2" fill="none" />
      <path d="m795 344-4 7h8z" fill="#999" />
    </g>
  );
}

function ShellFront() {
  return (
    <g>
      <path d="M452 345h5v11h-5zM452 391h5v12h-5z" fill="#aaa" stroke="#555" />
      <path d={frontRim + " Q936 371 936 380V450Q936 458 928 461C880 470 830 468 760 464 690 459 640 453 560 443L467 430Q454 428 454 417V345Q454 338 456 336z"} fill="url(#shell)" />
      <path d={frontRim} fill="none" stroke="#555554" strokeWidth="3" />
      <path d="M460 339C490 345 520 348 562 354" fill="none" stroke="#777" />
      <path d="M487 356 533 362V427L487 420z" fill="#010101" />
      <path d="M688 384 734 389V451L688 446z" fill="#010101" />
      <path d="M490 360 530 365V423L490 417zM691 388 731 392V448L691 443z" fill="none" stroke="#2c2c2c" strokeDasharray="1 4" />
      <path d="M560 357V412" stroke="#303030" strokeWidth="2" />
      <path d="M560 410V443" stroke="#999" />
      <path d="m899 386-1 72" stroke="#b0b0b0" strokeWidth="2" />
      <Bolts at={[[894, 392], [907, 391], [894, 423], [907, 422], [894, 454], [907, 453]]} r={3} fill="#929292" />
      <path d="M466 431C600 451 750 468 880 467" fill="none" stroke="#343434" />
    </g>
  );
}

function ViewCube() {
  return (
    <g fontFamily="Noto Sans CJK JP, sans-serif" fontSize="14" fill="#737c85">
      <ellipse cx="1236" cy="174" rx="26" ry="6" fill="#8e8e8e" opacity=".6" />
      <path d="M1213 141h22v37l-22-6z" fill="#c5c9cd" stroke="#9a9a9a" strokeDasharray="6 2" />
      <path d="M1235 141h24v31l-24 6z" fill="#d0d4d8" stroke="#9a9a9a" strokeDasharray="6 2" />
      <text x="1217" y="164">後</text>
      <text x="1240" y="163">左</text>
    </g>
  );
}

function Triad() {
  return (
    <g fontFamily="Liberation Sans, sans-serif" fontSize="9">
      <path d="M189 620V604" stroke="#178a17" />
      <path d="m189 600 4 8h-8z" fill="#127a12" />
      <path d="M175 619h12" stroke="#7a2323" />
      <path d="M191 619h14" stroke="#1515a0" />
      <circle cx="179" cy="619" r="3" fill="#8f2525" />
      <circle cx="198" cy="619" r="3" fill="#1414a5" />
      <text x="169" y="622" fill="#d05252">X</text>
      <text x="186" y="599" fill="#6fe07c">Y</text>
      <text x="203" y="622" fill="#3a3ad0">Z</text>
    </g>
  );
}

function NavIcon({ children }) {
  return (
    <svg width="17" height="17" viewBox="0 0 24 24" fill="#dedede" stroke="#808080" strokeWidth="1.500" aria-hidden="true">
      {children}
    </svg>
  );
}

function ModelView() {
  return (
    <Viewport>
      <Scene viewBox="153 98 1124 556" role="img" aria-label="RCCF-MAIN">
        <defs>
          <linearGradient id="shell">
            <stop offset="0" stopColor="#4f4f4f" />
            <stop offset=".03" stopColor="#2b2c2c" />
            <stop offset=".07" stopColor="#1b1e1c" />
            <stop offset=".15" stopColor="#171714" />
            <stop offset=".9" stopColor="#171714" />
            <stop offset=".93" stopColor="#1c1f1e" />
            <stop offset=".98" stopColor="#252727" />
            <stop offset="1" stopColor="#515151" />
          </linearGradient>
        </defs>
        <LeftUndercarriage />
        <RightUndercarriage />
        <Skirt />
        <Shell />
        <Engine />
        <Handle />
        <ShellFront />
        <ViewCube />
        <Triad />
        <path d="m291 157v11l2.500-2 2 4 1.500-1-2-4h3z" fill="#fff" stroke="#222" strokeWidth=".8" />
      </Scene>
      <ViewportButtons>
        <button aria-label="元に戻す"><Icon name="frame" size={10} /></button>
        <button aria-label="閉じる"><Icon name="cross" size={9} /></button>
      </ViewportButtons>
      <NavBar>
        <svg width="5" height="5" viewBox="0 0 6 6"><circle cx="3" cy="3" r="2" fill="none" stroke="#777" /></svg>
        <NavIcon><path d="M12 2h10v11A10 10 0 1 1 12 2z" /><circle cx="12" cy="12" r="6" /><path d="M10 15a4 4 0 1 1 5-1" fill="none" /></NavIcon>
        <Caret $soft />
        <hr />
        <NavIcon><path d="M8 23 2 13l2-1 4 4-3-10 2-1 4 8-1-11h2l2 10 3-9 2 1-2 10 4-4 2 1-5 12z" /></NavIcon>
        <NavIcon><path d="M2 2h11l5 5v13H2zM13 2v5h5" /><path d="m18 18 5 5" strokeWidth="3" /><circle cx="15" cy="15" r="5" /></NavIcon>
        <Caret $soft />
        <NavIcon><path d="m12 1 3 4h-6zM12 23l3-4h-6zM1 12l4-3v6zM23 12l-4-3v6z" /><ellipse cx="12" cy="12" rx="8" ry="3" fill="none" /><ellipse cx="12" cy="12" rx="3" ry="8" fill="none" /></NavIcon>
        <Caret $soft />
        <NavIcon><path d="M1 7h22v15H1z" /><path d="M6 11h12v7H6zM6 1v4M12 4h7" fill="#bbb" /></NavIcon>
        <svg width="5" height="5" viewBox="0 0 6 6"><circle cx="3" cy="3" r="2" fill="none" stroke="#777" /></svg>
      </NavBar>
    </Viewport>
  );
}

/* ---------- bars ---------- */

function Header() {
  return (
    <TitleBar>
      <QuickAccess>
        <button aria-label="Inventor"><Icon name="logo" /></button>
        <button aria-label="新規"><Icon name="newFile" /><Caret /></button>
        <button aria-label="開く"><Icon name="open" /></button>
        <button aria-label="保存"><Icon name="save" /></button>
        <button aria-label="元に戻す"><Icon name="undo" /><Caret $soft /></button>
        <button aria-label="やり直し"><Icon name="redo" /><Caret $soft /></button>
        <button aria-label="ホーム"><Icon name="home" /></button>
        <button aria-label="選択"><Icon name="select" /><Caret $soft /></button>
        <button aria-label="コンポーネント"><Icon name="parts" /><Caret $soft /></button>
        <button aria-label="更新"><Icon name="update" /></button>
        <button aria-label="材料ブラウザ"><Icon name="checker" /></button>
        <SelectBox $italic>
          <select aria-label="材料"><option>材料</option></select>
          <Caret />
        </SelectBox>
        <button aria-label="外観ブラウザ"><Icon name="ball" /></button>
        <SelectBox>
          <select aria-label="外観"><option>外観</option></select>
          <Caret />
        </SelectBox>
        <button aria-label="調整"><Icon name="ballAdd" /></button>
        <button aria-label="クリア"><Icon name="ballClear" /></button>
        <button aria-label="パラメータ"><Icon name="fx" /></button>
        <button aria-label="追加"><Icon name="plus" size={10} /></button>
        <button aria-label="カスタマイズ"><Icon name="caretBar" size={8} /></button>
      </QuickAccess>
      <WindowTitle>
        <span>Autodesk Inventor Professional 2021</span>
        <span>RCCF-MAIN.iam</span>
      </WindowTitle>
      <TitleRight>
        <SearchBox aria-label="ヘルプ" placeholder="ヘルプおよびコマンドを検索..." />
        <button><Icon name="user" size={11} />サインイン</button>
        <AccountTools>
          <Caret $soft />
          <button aria-label="ストア"><Icon name="trolley" /></button>
          <button aria-label="ヘルプメニュー"><Icon name="help" /><Caret $soft /></button>
        </AccountTools>
        <WindowButtons>
          <button aria-label="最小化"><Icon name="minimize" size={9} /></button>
          <button aria-label="縮小"><Icon name="restore" size={9} /></button>
          <button aria-label="終了"><Icon name="cross" size={9} /></button>
        </WindowButtons>
      </TitleRight>
    </TitleBar>
  );
}

function Big({ icon, lines, off }) {
  return (
    <BigButton $off={off}>
      <Icon name={icon} size={24} />
      {lines.map((line) => <span key={line}>{line}</span>)}
    </BigButton>
  );
}

function Small({ icon, label, off }) {
  return (
    <SmallButton $off={off}>
      <Icon name={icon} />
      {label}
    </SmallButton>
  );
}

function ToolRibbon() {
  return (
    <Ribbon>
      <Group>
        <Tools><Big icon="measure" lines={["計測"]} /></Tools>
        <GroupLabel>計測<Caret $spaced /></GroupLabel>
      </Group>
      <Group $pad={3}>
        <Tools>
          <Big icon="checker" lines={["材料"]} />
          <Divider />
          <Big icon="ball" lines={["外観"]} />
          <SmallTools>
            <Small icon="ballClear" label="クリア" />
            <Small icon="ballAdd" label="調整" />
          </SmallTools>
        </Tools>
        <GroupLabel>材料と外観<Caret $spaced /></GroupLabel>
      </Group>
      <Group>
        <Tools>
          <Big icon="appOptions" lines={["アプリケーション", "オプション"]} />
          <Big icon="docOptions" lines={["ドキュメント", "の設定"]} />
          <Big icon="migrate" lines={["設定を", "マイグレーション"]} />
          <Big icon="cart" lines={["Autodesk", "App Manager"]} />
          <SmallTools $apart>
            <Small icon="customize" label="カスタマイズ" />
            <Small icon="link" label="リンク" off />
            <Small icon="addin" label="アドイン" />
          </SmallTools>
          <SmallTools $apart>
            <Small icon="macro" label="マクロ" />
            <Small icon="vba" label="VBA エディタ" />
          </SmallTools>
        </Tools>
        <GroupLabel>オプション<Caret $spaced /></GroupLabel>
      </Group>
      <Group>
        <Tools $gap={5}>
          <Big icon="copy" lines={["コピー"]} off />
          <Big icon="cut" lines={["切り取り"]} off />
          <Divider />
          <BigButton $wide>
            <Icon name="paste" size={24} />
            形式を選択して貼り付け
            <Caret />
          </BigButton>
        </Tools>
        <GroupLabel>クリップボード</GroupLabel>
      </Group>
      <Group $plain>
        <Tools><Big icon="find" lines={["コンポーネント", "を検索"]} /></Tools>
        <GroupLabel>検索</GroupLabel>
      </Group>
    </Ribbon>
  );
}

function ModelBrowser() {
  return (
    <Browser>
      <BrowserTabs>
        <BrowserTab>
          モデル
          <button aria-label="タブを閉じる"><Icon name="cross" size={7} /></button>
        </BrowserTab>
        <button aria-label="タブを追加"><Icon name="add" size={8} /></button>
        <Spacer />
        <button aria-label="ブラウザ検索"><Icon name="search" size={10} /></button>
        <button aria-label="メニュー"><Icon name="menu" size={9} /></button>
      </BrowserTabs>
      <ViewTabs>
        <a href="#assembly">アセンブリ</a>
        <span>|</span>
        <a href="#modeling">モデリング</a>
      </ViewTabs>
      <TreeArea>
        <TreeList>
          <TreeRow $root><Icon name="assembly" />RCCF-MAIN.iam</TreeRow>
          {treeRows.map(([icon, label], i) => (
            <TreeRow key={i}>
              <button aria-label={label + " を展開"}><Icon name="expand" size={6} /></button>
              <Icon name={icon} />
              {label}
            </TreeRow>
          ))}
        </TreeList>
        <ScrollTrack $vertical>
          <Icon name="up" size={11} />
          <Thumb $vertical />
          <Spacer />
          <Icon name="down" size={11} />
        </ScrollTrack>
      </TreeArea>
      <ScrollTrack>
        <Icon name="left" />
        <Thumb />
        <Spacer />
        <Icon name="right" />
      </ScrollTrack>
    </Browser>
  );
}

export default function App() {
  return (
    <Page>
      <GlobalStyle />
      <Header />
      <TabBar>
        <Tab $file>ファイル</Tab>
        {tabs.map((tab) => <Tab key={tab} $active={tab === "ツール"}>{tab}</Tab>)}
        <TabExtra aria-label="表示切替"><Icon name="play" size={9} /><Caret /></TabExtra>
      </TabBar>
      <ToolRibbon />
      <Workspace>
        <ModelBrowser />
        <Canvas>
          <ModelView />
          <DocTabs>
            <button aria-label="ホームタブ"><Icon name="home" size={11} /></button>
            <DocTab>RCCF-MAIN.iam<Icon name="cross" size={6} /></DocTab>
            <Spacer />
            <button aria-label="タブ一覧"><Icon name="menu" size={9} /></button>
          </DocTabs>
        </Canvas>
      </Workspace>
      <StatusBar>
        準備完了
        <Coords>
          <span>875</span>
          <span>218</span>
        </Coords>
      </StatusBar>
    </Page>
  );
}
